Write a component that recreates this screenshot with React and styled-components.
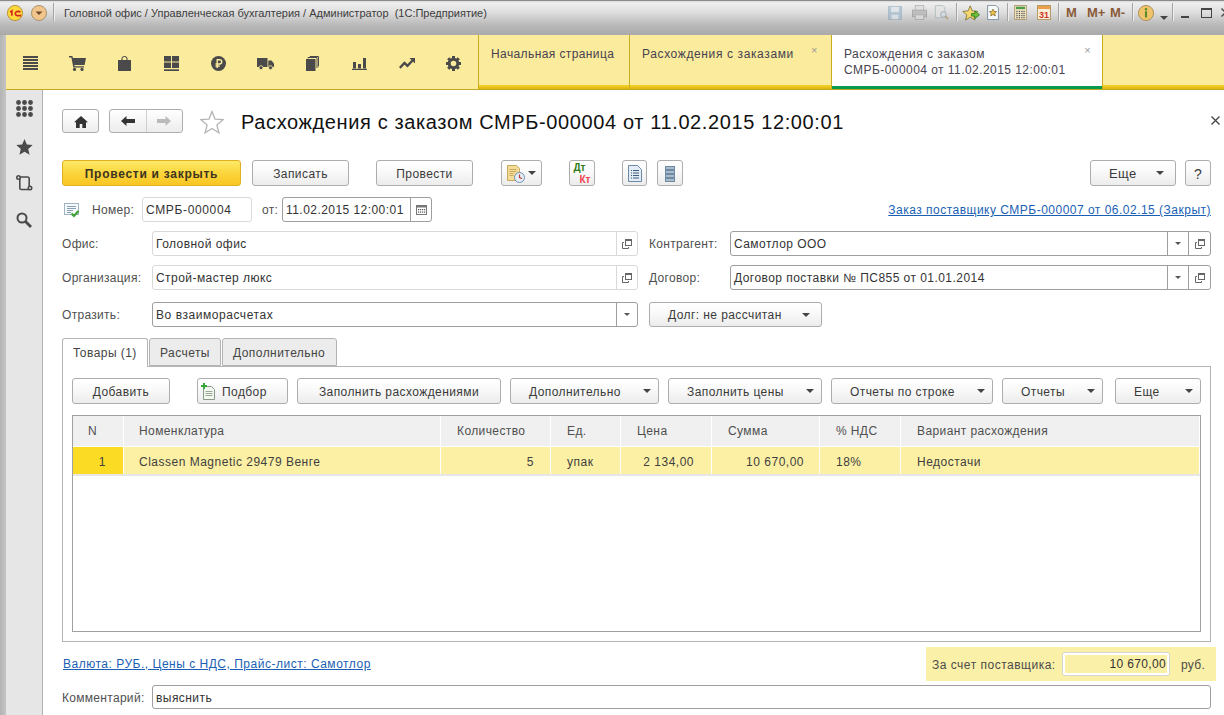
import React from 'react';
import styled, { createGlobalStyle } from 'styled-components';

const Global = createGlobalStyle`
  html, body { margin: 0; padding: 0; background: #fff; }
  body { font-family: "Liberation Sans", Arial, sans-serif; font-size: 12px; color: #333; }
`;

const Page = styled.div`
  position: relative;
  width: 1224px;
  height: 715px;
  overflow: hidden;
  background: #fff;
`;

// window frame
const TitleBar = styled.div`
  position: absolute;
  left: 0; top: 0; right: 0;
  height: 35px;
  display: flex;
  align-items: center;
  background: linear-gradient(#d8d8d8 0, #efefef 2px, #dcdcdc 12px, #b9b9b9 24px, #a8a8a8 35px);
  border-top: 1px solid #8a8a8a;
  box-sizing: border-box;
`;
const FrameLeft = styled.div`
  position: absolute;
  left: 0; top: 35px; bottom: 0;
  width: 6px;
  background: linear-gradient(90deg, #b4b4b4, #c4c4c4);
`;
const TitleText = styled.div`
  position: absolute;
  left: 64px; top: 5px;
  font-size: 11px;
  line-height: 14px;
  color: #3c3c3c;
  white-space: pre;
`;
const TitleIcon = styled.div`
  position: absolute;
  left: ${p => p.$x}px;
  top: ${p => p.$y}px;
  display: flex;
`;
const TitleDivider = styled.div`
  position: absolute;
  left: ${p => p.$x}px;
  top: 2px;
  width: 2px;
  height: 18px;
  background: linear-gradient(90deg, #a5a5a5 50%, #eeeeee 50%);
`;
const MemoText = styled.div`
  position: absolute;
  left: ${p => p.$x}px;
  top: 5px;
  font-size: 13px;
  line-height: 14px;
  font-weight: bold;
  color: #8a5a38;
`;

// yellow section panel
const SectionBar = styled.div`
  position: absolute;
  left: 6px; top: 35px; right: 0;
  height: 55px;
  background: #fbeb9d;
  box-sizing: border-box;
  border-bottom: 1px solid #c2a91f;
`;
const SectionIcon = styled.div`
  position: absolute;
  left: ${p => p.$x - 6}px;
  top: 19px;
  width: 18px;
  height: 18px;
  display: flex;
  align-items: center;
  justify-content: center;
`;
const GoldLine = styled.div`
  position: absolute;
  left: ${p => p.$x - 6}px;
  right: ${p => (p.$end ? `${1224 - p.$end}px` : 0)};
  top: 50px;
  height: 4px;
  background: linear-gradient(#f6d32a, #dcb60f);
`;
const OpenTab = styled.div`
  position: absolute;
  left: ${p => p.$x - 6}px;
  width: ${p => p.$w}px;
  top: 0;
  height: 54px;
  box-sizing: border-box;
  border-left: 1px solid #c9ad1c;
  border-right: ${p => (p.$last ? '1px solid #c9ad1c' : '0')};
  background: ${p => (p.$active ? '#fff' : 'transparent')};
  color: #47424f;
  padding: 12px 0 0 12px;
  font-size: 12px;
  line-height: 15.5px;
  letter-spacing: ${p => p.$ls || 0.45}px;
  white-space: pre;
`;
const ActiveUnderline = styled.div`
  position: absolute;
  left: 0; right: 0; bottom: 0;
  height: 3px;
  background: #0a9a4d;
`;
const TabClose = styled.span`
  position: absolute;
  top: 10px;
  right: ${p => p.$r}px;
  font-size: 11px;
  line-height: 10px;
  color: #9a9a9a;
`;

// left panel
const SidePanel = styled.div`
  position: absolute;
  left: 6px; top: 90px; bottom: 0;
  width: 37px;
  box-sizing: border-box;
  background: #e6e6e6;
  border-right: 1px solid #b0b0b0;
`;
const SideIcon = styled.div`
  position: absolute;
  left: 9px;
  top: ${p => p.$y - 90}px;
  width: 18px;
  height: 18px;
  display: flex;
  align-items: center;
  justify-content: center;
`;

// form rows
const Row = styled.div`
  position: absolute;
  left: ${p => p.$left || 62}px;
  right: 13px;
  top: ${p => p.$top}px;
  height: ${p => p.$h || 25}px;
  display: flex;
  align-items: stretch;
`;
const Label = styled.div`
  width: ${p => p.$w}px;
  margin-left: ${p => p.$ml || 0}px;
  flex: none;
  line-height: 26px;
  color: #4f4f4f;
  letter-spacing: 0.3px;
  white-space: nowrap;
`;
const Field = styled.div`
  width: ${p => p.$w}px;
  flex: none;
  margin-left: ${p => p.$ml || 0}px;
  box-sizing: border-box;
  display: flex;
  border: 1px solid ${p => (p.$strong ? '#9e9e9e' : '#d9d9d9')};
  border-radius: 3px;
  background: #fff;
`;
const FieldText = styled.div`
  flex: 1;
  padding-left: 3px;
  line-height: 24px;
  color: #333;
  letter-spacing: ${p => p.$ls || 0.45}px;
  white-space: nowrap;
  overflow: hidden;
`;
const FieldButton = styled.div`
  width: ${p => p.$w || 21}px;
  flex: none;
  box-sizing: border-box;
  border-left: 1px solid ${p => (p.$strong ? '#9e9e9e' : '#d9d9d9')};
  display: flex;
  align-items: center;
  justify-content: center;
`;

const Button = styled.div`
  width: ${p => p.$w}px;
  margin-left: ${p => p.$ml || 0}px;
  flex: none;
  box-sizing: border-box;
  display: flex;
  align-items: center;
  justify-content: ${p => (p.$arrow ? 'flex-start' : 'center')};
  position: relative;
  padding: 1px 0 0 ${p => p.$pl || 0}px;
  border: 1px solid #adadad;
  border-radius: 3px;
  background: linear-gradient(#ffffff, #fafafa 40%, #ececec);
  color: #3a3a3a;
  font-size: ${p => p.$fs || 12}px;
  letter-spacing: 0.42px;
  white-space: nowrap;
`;
const PrimaryButton = styled(Button)`
  border-color: #e0b020;
  background: linear-gradient(#fde968, #fbd53c 50%, #f9c623);
  color: #3d3420;
  font-weight: bold;
  letter-spacing: 0.73px;
`;
const ButtonArrow = styled.span`
  position: absolute;
  right: ${p => p.$r || 13}px;
  top: 50%;
  margin-top: -2px;
  width: 0;
  height: 0;
  border-left: 4px solid transparent;
  border-right: 4px solid transparent;
  border-top: 4px solid #444;
`;
const ButtonIcon = styled.span`
  display: flex;
  margin-right: 5px;
  margin-top: -1px;
`;
const SmallArrow = styled.span`
  width: 0;
  height: 0;
  border-left: 3px solid transparent;
  border-right: 3px solid transparent;
  border-top: 3px solid #555;
`;
const DocLink = styled.a`
  margin-left: auto;
  line-height: 26px;
  color: #1a5fb4;
  text-decoration: underline;
  letter-spacing: 0.49px;
  white-space: nowrap;
`;

// header
const PageTitle = styled.div`
  position: absolute;
  left: 241px;
  top: 108px;
  font-size: 20px;
  line-height: 28px;
  letter-spacing: 0.62px;
  color: #111;
  white-space: nowrap;
`;
const NavGroup = styled.div`
  width: 74px;
  margin-left: 10px;
  flex: none;
  box-sizing: border-box;
  display: flex;
  border: 1px solid #adadad;
  border-radius: 3px;
  background: linear-gradient(#ffffff, #ececec);
`;
const NavCell = styled.div`
  flex: 1;
  display: flex;
  align-items: center;
  justify-content: center;
  border-left: ${p => (p.$sep ? '1px solid #cfcfcf' : '0')};
`;
const CloseForm = styled.div`
  position: absolute;
  left: 1211px;
  top: 116px;
  width: 9px;
  height: 10px;
  display: flex;
`;

// tabs
const TabStrip = styled.div`
  position: absolute;
  left: 62px;
  top: 338px;
  height: 29px;
  display: flex;
  z-index: 1;
`;
const Tab = styled.div`
  width: ${p => p.$w}px;
  margin-right: 1px;
  box-sizing: border-box;
  border: 1px solid #b4b4b4;
  border-bottom: ${p => (p.$active ? '0' : '1px solid #b4b4b4')};
  border-radius: 3px 3px 0 0;
  background: ${p => (p.$active ? '#fff' : '#ececec')};
  height: ${p => (p.$active ? 29 : 28)}px;
  line-height: 28px;
  padding-left: 10px;
  color: #444;
  letter-spacing: 0.45px;
  white-space: nowrap;
`;
const TabPanel = styled.div`
  position: absolute;
  left: 62px;
  top: 366px;
  width: 1149px;
  height: 276px;
  box-sizing: border-box;
  border: 1px solid #b4b4b4;
`;

// table
const Grid = styled.div`
  position: absolute;
  left: 72px;
  top: 415px;
  width: 1129px;
  height: 217px;
  box-sizing: border-box;
  border: 1px solid #a0a0a0;
  background: #fff;
`;
const GridRow = styled.div`
  display: flex;
  height: ${p => p.$h}px;
  box-sizing: border-box;
  border-bottom: ${p => (p.$line ? '2px solid #e6e6e6' : '0')};
`;
const HeadCell = styled.div`
  width: ${p => p.$w}px;
  flex: none;
  box-sizing: border-box;
  background: #f0f0f0;
  border-right: 1px solid #fff;
  border-bottom: 1px solid #fff;
  padding-left: ${p => p.$pl}px;
  line-height: 31px;
  color: #4f4f4f;
  letter-spacing: 0.4px;
  white-space: nowrap;
`;
const Cell = styled.div`
  width: ${p => p.$w}px;
  flex: none;
  box-sizing: border-box;
  background: ${p => (p.$marker ? '#fbdb23' : '#fcf0a5')};
  border-right: 1px solid #fff;
  padding: 0 ${p => p.$pr || 0}px 0 ${p => p.$pl || 0}px;
  line-height: 30px;
  text-align: ${p => (p.$right ? 'right' : 'left')};
  color: #3f3f3f;
  letter-spacing: 0.5px;
  white-space: nowrap;
`;

// footer
const FooterLink = styled.a`
  position: absolute;
  left: 63px;
  top: 657px;
  line-height: 15px;
  color: #1a5fb4;
  text-decoration: underline;
  letter-spacing: 0.51px;
  white-space: nowrap;
`;
const TotalBox = styled.div`
  position: absolute;
  left: 926px;
  top: 647px;
  width: 290px;
  height: 34px;
  background: #fbf0a8;
  display: flex;
  align-items: center;
`;
const TotalLabel = styled.div`
  margin-left: 6px;
  padding-top: 1px;
  width: 130px;
  color: #4b4b4b;
  letter-spacing: 0.5px;
  white-space: nowrap;
`;
const TotalValue = styled.div`
  width: 108px;
  height: 24px;
  box-sizing: border-box;
  border: 1px solid #d5d5d5;
  outline: 2px solid #fff;
  outline-offset: -3px;
  border-radius: 3px;
  background: #fbf0a8;
  text-align: right;
  padding-right: 3px;
  line-height: 23px;
  color: #333;
  letter-spacing: 0.35px;
`;
const TotalUnit = styled.div`
  margin-left: 11px;
  padding-top: 1px;
  color: #4b4b4b;
  letter-spacing: 0.3px;
`;

const D = '#4a4a4a';

const Menu = () => (
  <svg width="15" height="15" viewBox="0 0 15 15" fill={D}>
    {[0, 3, 6, 9, 12].map(y => <rect key={y} x="0" y={y} width="15" height="2" />)}
  </svg>
);
const Cart = () => (
  <svg width="17" height="15" viewBox="0 0 17 15" fill={D}>
    <path d="M0 0h3.400l.5 2H17l-1.400 7H5.400l.2 1.200H15v1.300H4.300L2.400 1.400H0z" />
    <circle cx="5.500" cy="13.400" r="1.600" />
    <circle cx="13" cy="13.400" r="1.600" />
  </svg>
);
const Bag = () => (
  <svg width="13" height="15" viewBox="0 0 13 15">
    <path fill={D} d="M0 4h3.500V2.500C3.500 1 5 0 6.500 0S9.500 1 9.500 2.500V4H13v11H0z" />
    <path fill="#fbeb9d" d="M4.600 2.600c0-1 1-1.500 1.900-1.500s1.900.5 1.900 1.500V4H4.600z" />
  </svg>
);
const Tiles = () => (
  <svg width="15" height="15" viewBox="0 0 15 15" fill={D}>
    <rect x="0" y="0" width="7" height="5.500" />
    <rect x="8" y="0" width="7" height="5.500" />
    <rect x="0" y="6.500" width="7" height="5.500" />
    <rect x="8" y="6.500" width="7" height="5.500" />
    <rect x="0" y="13.300" width="15" height="1.700" />
  </svg>
);
const Ruble = () => (
  <svg width="15" height="15" viewBox="0 0 15 15">
    <circle cx="7.500" cy="7.500" r="7.500" fill={D} />
    <path fill="none" stroke="#fbeb9d" strokeWidth="1.400" d="M6.200 12V3.700h2.400a2 2 0 0 1 0 4.300H4.500M4.500 10h4.200" />
  </svg>
);
const Truck = () => (
  <svg width="17" height="13" viewBox="0 0 17 13" fill={D}>
    <path d="M0 1h10.500v9H0z" />
    <path d="M11.300 3.500h3.200L17 6.500V10h-5.700z" />
    <circle cx="4" cy="10.700" r="2" stroke="#fbeb9d" strokeWidth=".8" />
    <circle cx="13.500" cy="10.700" r="2" stroke="#fbeb9d" strokeWidth=".8" />
  </svg>
);
const Docs = () => (
  <svg width="13" height="15" viewBox="0 0 13 15">
    <path fill={D} d="M0 3h9.500v12H0z" />
    <path fill="none" stroke={D} d="M2 2.500V1.500h9v10.500M4 1V.5h8.500v10" />
  </svg>
);
const Bars = () => (
  <svg width="15" height="13" viewBox="0 0 15 13" fill={D}>
    <rect x="1" y="5" width="3" height="6.500" />
    <rect x="6" y="7" width="3" height="4.500" />
    <rect x="11" y="1" width="3" height="10.500" />
    <rect x="0" y="11.800" width="15" height="1.200" />
  </svg>
);
const Trend = () => (
  <svg width="16" height="11" viewBox="0 0 16 11">
    <path fill="none" stroke={D} strokeWidth="2.400" d="M.8 9.800 5.500 5l3 2.800 5-5.300" />
    <path fill={D} d="M10.500 0H16v5.500z" />
  </svg>
);
const Gear = () => (
  <svg width="15" height="15" viewBox="0 0 15 15">
    <circle cx="7.500" cy="7.500" r="4.300" fill="none" stroke={D} strokeWidth="3" />
    {[0, 45, 90, 135, 180, 225, 270, 315].map(a => (
      <rect key={a} x="6" y="0" width="3" height="2.500" fill={D} transform={`rotate(${a} 7.500 7.500)`} />
    ))}
  </svg>
);
const Apps = () => (
  <svg width="17" height="17" viewBox="0 0 17 17" fill={D}>
    {[2.5, 8.5, 14.5].map(y => [2.5, 8.5, 14.5].map(x => <circle key={`${x}-${y}`} cx={x} cy={y} r="2.400" />))}
  </svg>
);
const Star = () => (
  <svg width="17" height="16" viewBox="0 0 17 16" fill={D}>
    <path d="M8.500 0l2.300 5.600 5.900.5-4.500 3.800 1.400 5.900-5.100-3.100-5.100 3.100 1.400-5.900L.3 6.100l5.900-.5z" />
  </svg>
);
const History = () => (
  <svg width="17" height="16" viewBox="0 0 17 16" fill="none" stroke={D} strokeWidth="1.600">
    <path d="M3 2h8.500c1.200 0 1.700.7 1.700 1.700V11M3.800 3.500V13c0 1 .6 1.500 1.600 1.500H13" />
    <circle cx="2.500" cy="2.500" r="1.700" fill="#e6e6e6" />
    <circle cx="14" cy="13" r="1.700" fill="#e6e6e6" />
  </svg>
);
const Search = () => (
  <svg width="16" height="16" viewBox="0 0 16 16" fill="none" stroke={D}>
    <circle cx="6" cy="6" r="4.500" strokeWidth="2" />
    <path d="M9.500 9.500 15 15" strokeWidth="2.800" />
  </svg>
);
const Home = () => (
  <svg width="14" height="12" viewBox="0 0 14 12" fill="#333">
    <path d="M7 0l7 6.300h-2V12H8.300V8H5.700v4H2V6.300H0z" />
  </svg>
);
const ArrowLeft = ({ color }) => (
  <svg width="14" height="10" viewBox="0 0 14 10" fill={color}>
    <path d="M0 5l5.500-5v3H14v4H5.500v3z" />
  </svg>
);
const ArrowRight = ({ color }) => (
  <svg width="14" height="10" viewBox="0 0 14 10" fill={color}>
    <path d="M14 5L8.500 0v3H0v4h8.500v3z" />
  </svg>
);
const BigStar = () => (
  <svg width="24" height="24" viewBox="0 0 24 24" fill="#fff" stroke="#b5b5b5" strokeWidth="1.300">
    <path d="M12 1.500l3 7.600 8.100.6-6.200 5.200 2 7.900L12 18.500l-6.900 4.300 2-7.900L.9 9.700 9 9.100z" />
  </svg>
);
const Link2 = () => (
  <svg width="10" height="10" viewBox="0 0 10 10" fill="none" stroke="#666">
    <rect x="3.500" y=".5" width="6" height="6" />
    <path d="M3.500 1.500h6" />
    <path d="M2 3.500H.5v6h6V8" />
  </svg>
);
const Calendar = () => (
  <svg width="11" height="10" viewBox="0 0 11 10">
    <rect x=".5" y=".5" width="10" height="9" fill="#fff" stroke="#777" />
    <rect x="1" y="1" width="9" height="1.500" fill="#777" />
    {[2, 4, 6, 8].map(x => [4, 6.5].map(y => <rect key={`${x}${y}`} x={x} y={y} width="1.200" height="1.200" fill="#555" />))}
  </svg>
);
const Posted = () => (
  <svg width="16" height="15" viewBox="0 0 16 15">
    <rect x=".5" y=".5" width="14" height="11" fill="#f5f9fc" stroke="#9fb5c4" />
    <path stroke="#8aa0b0" d="M3 3.500h9M3 5.500h9M3 7.500h6M3 9.500h4" />
    <path fill="none" stroke="#3ea332" strokeWidth="2.200" d="M7.500 10.500l2.500 2.500 4.500-5" />
  </svg>
);
const DocClock = () => (
  <svg width="20" height="20" viewBox="0 0 20 20">
    <path fill="#f4dd97" stroke="#c8a960" d="M1.500 1.500h9l3 3v12h-12z" />
    <path stroke="#c8a960" d="M3.500 5.500h7M3.500 7.500h7M3.500 9.500h4M3.500 11.500h4" />
    <circle cx="13.500" cy="13.500" r="5" fill="#e6eef6" stroke="#6d8fb3" />
    <path stroke="#c03a3a" strokeWidth="1.200" d="M13.500 10.500v3l2.500 1" fill="none" />
  </svg>
);
const DtKt = styled.div`
  display: flex;
  flex-direction: column;
  font-family: "Liberation Sans", sans-serif;
  font-weight: bold;
  font-size: 10px;
  line-height: 12px;
  letter-spacing: 0;
`;
const Dt = styled.span`
  color: #2d7a14;
`;
const Kt = styled.span`
  color: #f0454f;
  padding-left: 6px;
`;
const Report = () => (
  <svg width="14" height="17" viewBox="0 0 14 17">
    <path fill="#e4edf6" stroke="#6b8aa8" d="M.5.500h9l4 4v12H.5z" />
    <path stroke="#3f5f7c" d="M3 5.500h1M5 5.500h6M3 8h1M5 8h6M3 10.500h1M5 10.500h6M3 13h1M5 13h6" />
  </svg>
);
const Stack = () => (
  <svg width="10" height="16" viewBox="0 0 10 16">
    {[0, 4, 8, 12].map(y => <rect key={y} x=".5" y={y + .5} width="9" height="3" fill="#a9bccb" stroke="#6f8ba3" />)}
  </svg>
);
const AddDoc = () => (
  <svg width="17" height="17" viewBox="0 0 17 17">
    <path fill="#f3f7ee" stroke="#8a9a8a" d="M3.500 3.500h8l3 3v10h-11z" />
    <path stroke="#9aa89a" d="M5.500 8.500h7M5.500 10.500h7M5.500 12.500h7" />
    <path stroke="#3aa53a" strokeWidth="2" d="M4 0v6M1 3h6" />
  </svg>
);

const Logo1C = () => (
  <svg width="16" height="16" viewBox="0 0 18 18">
    <circle cx="9" cy="9" r="8.500" fill="#fbd93c" stroke="#b58a2e" />
    <path fill="none" stroke="#d4251c" strokeWidth="1.800" d="M3.500 8l2-1.500V12M15 8.200c-.8-1.400-4.500-1.600-5.500.5-.8 2 1 3.500 3 3.300H16" />
  </svg>
);
const SysMenu = () => (
  <svg width="16" height="16" viewBox="0 0 16 16">
    <circle cx="8" cy="8" r="7.500" fill="#f2c58c" stroke="#a8936c" />
    <path fill="#6b4d2b" d="M4.500 6.500h7L8 10z" />
  </svg>
);
const FadedSave = () => (
  <svg width="14" height="14" viewBox="0 0 16 16" opacity=".55">
    <path fill="#8fb0c8" stroke="#7a9db6" d="M.5.500h15v15H.5z" />
    <rect x="3.500" y="1" width="9" height="6" fill="#dde8ef" />
    <rect x="4" y="10" width="8" height="5" fill="#dde8ef" />
  </svg>
);
const FadedPrint = () => (
  <svg width="15" height="15" viewBox="0 0 16 16" opacity=".6">
    <rect x="3.500" y=".5" width="9" height="6" fill="#ddd" stroke="#999" />
    <rect x=".5" y="5.500" width="15" height="7" fill="#aaa" stroke="#888" />
    <rect x="3.500" y="10.500" width="9" height="5" fill="#ddd" stroke="#999" />
  </svg>
);
const FadedPreview = () => (
  <svg width="15" height="15" viewBox="0 0 16 16" opacity=".6">
    <path fill="#e4e4e4" stroke="#9aa" d="M1.500.500h8l2 2v11h-10z" />
    <circle cx="10" cy="10" r="3" fill="#cfdce6" stroke="#7f8f9a" />
    <path stroke="#a38a60" strokeWidth="2" d="M12 12l3 3" />
  </svg>
);
const StarGo = () => (
  <svg width="19" height="17" viewBox="0 0 22 20">
    <path fill="#f5d76e" stroke="#7e7433" d="M9.500 1l2.500 6 6.300.5-4.800 4.100 1.500 6.100-5.500-3.300L4 17.700l1.500-6.100L.7 7.500 7 7z" />
    <path fill="#6fc13b" stroke="#2f7a1c" d="M11 10h4V7l5.500 4.500L15 16v-3h-4z" />
  </svg>
);
const StarDoc = () => (
  <svg width="12" height="15" viewBox="0 0 14 18">
    <path fill="#f7f9fb" stroke="#6e8396" d="M.5.500h10l3 3v14H.5z" />
    <path fill="#eec14a" stroke="#8c7430" d="M7 5l1.300 2.700 3 .3-2.200 2 .7 3L7 11.500 4.200 13l.7-3-2.200-2 3-.3z" />
  </svg>
);
const Calc = () => (
  <svg width="13" height="15" viewBox="0 0 15 18">
    <rect x=".5" y=".5" width="14" height="17" fill="#f2e7c4" stroke="#a89366" />
    <rect x="2" y="2" width="11" height="3" fill="#4e9c4e" />
    {[7, 9.5, 12, 14.5].map(y => [2.5, 5.5, 8.5, 11].map(x => <rect key={`${x}${y}`} x={x} y={y} width="1.500" height="1.500" fill="#555" />))}
  </svg>
);
const Cal31 = () => (
  <svg width="14" height="15" viewBox="0 0 14 15">
    <rect x=".5" y=".5" width="13" height="14" fill="#fbf0d6" stroke="#b69a6a" />
    <rect x="1" y="1" width="12" height="3" fill="#e9a04c" />
    <text x="7" y="13" textAnchor="middle" fontFamily="Liberation Sans" fontSize="9" fontWeight="bold" fill="#d0342c">31</text>
  </svg>
);
const InfoBall = () => (
  <svg width="16" height="16" viewBox="0 0 18 18">
    <circle cx="9" cy="9" r="8.500" fill="#f0c46a" stroke="#a48a52" />
    <rect x="7.800" y="7" width="2.400" height="7" fill="#5a8a2a" />
    <circle cx="9" cy="4.800" r="1.400" fill="#5a8a2a" />
  </svg>
);
const DownTiny = () => (
  <svg width="8" height="4" viewBox="0 0 8 4"><path fill="#444" d="M0 0h8L4 4z" /></svg>
);
const Minimize = () => (
  <svg width="8" height="2" viewBox="0 0 8 2"><rect width="8" height="2" fill="#444" /></svg>
);
const Maximize = () => (
  <svg width="11" height="10" viewBox="0 0 11 10" fill="none" stroke="#444">
    <rect x=".5" y="1" width="10" height="8.500" /><path strokeWidth="2" d="M0 1h11" />
  </svg>
);
const CloseX = () => (
  <svg width="9" height="9" viewBox="0 0 9 9" stroke="#444" strokeWidth="1.300"><path d="M.5.500l8 8M8.500.500l-8 8" /></svg>
);

const sectionIcons = [
  [21, <Menu key="m" />], [68, <Cart key="c" />], [115, <Bag key="b" />], [162, <Tiles key="t" />],
  [209, <Ruble key="r" />], [256, <Truck key="tr" />], [303, <Docs key="d" />], [350, <Bars key="ba" />],
  [398, <Trend key="tn" />], [444, <Gear key="g" />],
];

const columns = [
  ['N', 51, 15], ['Номенклатура', 317, 15], ['Количество', 110, 16], ['Ед.', 70, 16],
  ['Цена', 91, 16], ['Сумма', 108, 16], ['% НДС', 81, 16], ['Вариант расхождения', 299, 16],
];

function App() {
  return (
    <Page>
      <Global />

      <TitleBar>
        <TitleIcon $x={7} $y={4}><Logo1C /></TitleIcon>
        <TitleIcon $x={31} $y={4}><SysMenu /></TitleIcon>
        <TitleDivider $x={53} />
        <TitleText>Головной офис / Управленческая бухгалтерия / Администратор  (1С:Предприятие)</TitleText>
        <TitleIcon $x={888} $y={5}><FadedSave /></TitleIcon>
        <TitleIcon $x={912} $y={4}><FadedPrint /></TitleIcon>
        <TitleIcon $x={934} $y={4}><FadedPreview /></TitleIcon>
        <TitleDivider $x={956} />
        <TitleIcon $x={962} $y={4}><StarGo /></TitleIcon>
        <TitleIcon $x={987} $y={4}><StarDoc /></TitleIcon>
        <TitleDivider $x={1007} />
        <TitleIcon $x={1014} $y={4}><Calc /></TitleIcon>
        <TitleIcon $x={1037} $y={4}><Cal31 /></TitleIcon>
        <TitleDivider $x={1058} />
        <MemoText $x={1066}>M</MemoText>
        <MemoText $x={1087}>M+</MemoText>
        <MemoText $x={1110}>M-</MemoText>
        <TitleDivider $x={1132} />
        <TitleIcon $x={1138} $y={4}><InfoBall /></TitleIcon>
        <TitleIcon $x={1160} $y={15}><DownTiny /></TitleIcon>
        <TitleDivider $x={1172} />
        <TitleIcon $x={1181} $y={15}><Minimize /></TitleIcon>
        <TitleIcon $x={1201} $y={7}><Maximize /></TitleIcon>
        <TitleIcon $x={1221} $y={7}><CloseX /></TitleIcon>
      </TitleBar>
      <FrameLeft />

      <SectionBar>
        {sectionIcons.map(([x, icon]) => <SectionIcon key={x} $x={x}>{icon}</SectionIcon>)}
        <GoldLine $x={478} $end={831} />
        <GoldLine $x={1103} />
        <OpenTab $x={478} $w={151} $ls={0.4}>Начальная страница</OpenTab>
        <OpenTab $x={629} $w={202} $ls={0.62}>
          Расхождения с заказами
          <TabClose $r={13}>×</TabClose>
        </OpenTab>
        <OpenTab $x={831} $w={272} $active $last>
          {'Расхождения с заказом\nСМРБ-000004 от 11.02.2015 12:00:01'}
          <TabClose $r={11}>×</TabClose>
          <ActiveUnderline />
        </OpenTab>
      </SectionBar>

      <SidePanel>
        <SideIcon $y={99}><Apps /></SideIcon>
        <SideIcon $y={138}><Star /></SideIcon>
        <SideIcon $y={174}><History /></SideIcon>
        <SideIcon $y={211}><Search /></SideIcon>
      </SidePanel>

      <Row $top={109} $h={24}>
        <Button $w={37}><Home /></Button>
        <NavGroup>
          <NavCell><ArrowLeft color="#333" /></NavCell>
          <NavCell $sep><ArrowRight color="#bbb" /></NavCell>
        </NavGroup>
      </Row>
      <TitleIcon $x={200} $y={110}><BigStar /></TitleIcon>
      <PageTitle>Расхождения с заказом СМРБ-000004 от 11.02.2015 12:00:01</PageTitle>
      <CloseForm><CloseX /></CloseForm>

      <Row $top={160} $h={26}>
        <PrimaryButton $w={179}>Провести и закрыть</PrimaryButton>
        <Button $w={97} $ml={11}>Записать</Button>
        <Button $w={97} $ml={27}>Провести</Button>
        <Button $w={41} $ml={28} $arrow $pl={4}><DocClock /><ButtonArrow $r={5} /></Button>
        <Button $w={26} $ml={27}>
          <DtKt><Dt>Дт</Dt><Kt>Кт</Kt></DtKt>
        </Button>
        <Button $w={25} $ml={27}><Report /></Button>
        <Button $w={26} $ml={10}><Stack /></Button>
        <Button $w={86} $ml={407} $arrow $pl={18} $fs={13}>Еще<ButtonArrow $r={11} /></Button>
        <Button $w={26} $ml={9} $fs={14}>?</Button>
      </Row>

      <Row $top={197}>
        <TitleIcon $x={2} $y={6}><Posted /></TitleIcon>
        <Label $w={50} $ml={30}>Номер:</Label>
        <Field $w={110}><FieldText $ls={0.65}>СМРБ-000004</FieldText></Field>
        <Label $w={20} $ml={10}>от:</Label>
        <Field $w={150} $strong>
          <FieldText>11.02.2015 12:00:01</FieldText>
          <FieldButton $strong><Calendar /></FieldButton>
        </Field>
        <DocLink>Заказ поставщику СМРБ-000007 от 06.02.15 (Закрыт)</DocLink>
      </Row>

      <Row $top={231}>
        <Label $w={90}>Офис:</Label>
        <Field $w={486}>
          <FieldText>Головной офис</FieldText>
          <FieldButton><Link2 /></FieldButton>
        </Field>
        <Label $w={81} $ml={11}>Контрагент:</Label>
        <Field $w={481} $strong>
          <FieldText>Самотлор ООО</FieldText>
          <FieldButton $strong><SmallArrow /></FieldButton>
          <FieldButton $w={22} $strong><Link2 /></FieldButton>
        </Field>
      </Row>

      <Row $top={265}>
        <Label $w={90}>Организация:</Label>
        <Field $w={486}>
          <FieldText>Строй-мастер люкс</FieldText>
          <FieldButton><Link2 /></FieldButton>
        </Field>
        <Label $w={81} $ml={11}>Договор:</Label>
        <Field $w={481} $strong>
          <FieldText>Договор поставки № ПС855 от 01.01.2014</FieldText>
          <FieldButton $strong><SmallArrow /></FieldButton>
          <FieldButton $w={22} $strong><Link2 /></FieldButton>
        </Field>
      </Row>

      <Row $top={302}>
        <Label $w={90}>Отразить:</Label>
        <Field $w={486} $strong>
          <FieldText $ls={0.55}>Во взаиморасчетах</FieldText>
          <FieldButton $strong><SmallArrow /></FieldButton>
        </Field>
        <Button $w={173} $ml={11} $arrow $pl={18}>Долг: не рассчитан<ButtonArrow $r={11} /></Button>
      </Row>

      <TabPanel />
      <TabStrip>
        <Tab $w={86} $active>Товары (1)</Tab>
        <Tab $w={72}>Расчеты</Tab>
        <Tab $w={115}>Дополнительно</Tab>
      </TabStrip>

      <Row $top={378} $h={26} $left={72}>
        <Button $w={98}>Добавить</Button>
        <Button $w={91} $ml={27} $arrow $pl={2}><ButtonIcon><AddDoc /></ButtonIcon>Подбор</Button>
        <Button $w={204} $ml={9}>Заполнить расхождениями</Button>
        <Button $w={149} $ml={9} $arrow $pl={18}>Дополнительно<ButtonArrow $r={7} /></Button>
        <Button $w={154} $ml={9} $arrow $pl={18}>Заполнить цены<ButtonArrow $r={7} /></Button>
        <Button $w={162} $ml={9} $arrow $pl={18}>Отчеты по строке<ButtonArrow $r={7} /></Button>
        <Button $w={101} $ml={9} $arrow $pl={18}>Отчеты<ButtonArrow $r={7} /></Button>
        <Button $w={86} $ml={12} $arrow $pl={18}>Еще<ButtonArrow $r={7} /></Button>
      </Row>

      <Grid>
        <GridRow $h={31}>
          {columns.map(([title, w, pl]) => <HeadCell key={title} $w={w} $pl={pl}>{title}</HeadCell>)}
        </GridRow>
        <GridRow $h={29} $line>
          <Cell $w={51} $marker $right $pr={17}>1</Cell>
          <Cell $w={317} $pl={15}>Classen Magnetic 29479 Венге</Cell>
          <Cell $w={110} $right $pr={16}>5</Cell>
          <Cell $w={70} $pl={16}>упак</Cell>
          <Cell $w={91} $right $pr={17}>2 134,00</Cell>
          <Cell $w={108} $right $pr={15}>10 670,00</Cell>
          <Cell $w={81} $pl={16}>18%</Cell>
          <Cell $w={299} $pl={16}>Недостачи</Cell>
        </GridRow>
      </Grid>

      <FooterLink>Валюта: РУБ., Цены с НДС, Прайс-лист: Самотлор</FooterLink>
      <TotalBox>
        <TotalLabel>За счет поставщика:</TotalLabel>
        <TotalValue>10 670,00</TotalValue>
        <TotalUnit>руб.</TotalUnit>
      </TotalBox>

      <Row $top={685} $h={24}>
        <Label $w={90}>Комментарий:</Label>
        <Field $w={1059} $strong><FieldText>выяснить</FieldText></Field>
      </Row>
    </Page>
  );
}

export default App;
